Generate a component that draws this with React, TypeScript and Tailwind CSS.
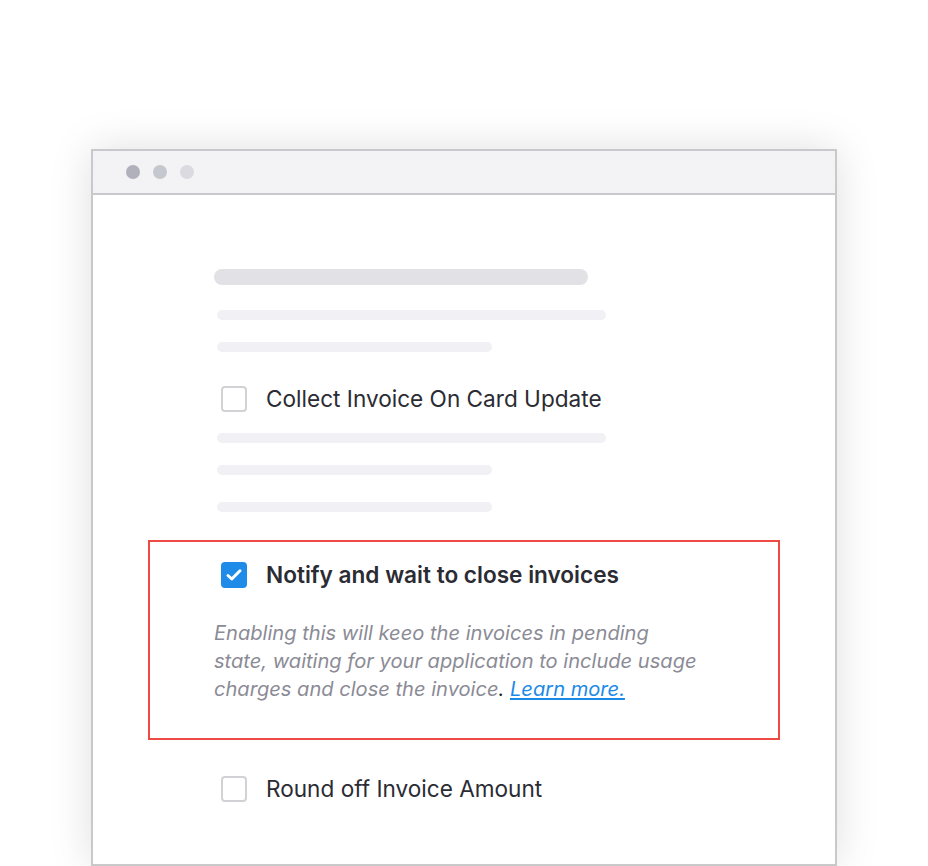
function Checkbox({ checked }: { checked?: boolean }) {
    if (checked) {
        return (
            <span className="flex h-[26px] w-[26px] shrink-0 items-center justify-center rounded-[4px] bg-[#1f8be8]">
                <svg width="18" height="18" viewBox="0 0 18 18" fill="none">
                    <path d="M3 9.5l3.8 3.5L15 4.8" stroke="white" strokeWidth="3" strokeLinecap="round" strokeLinejoin="round" />
                </svg>
            </span>
        )
    }
    return <span className="h-[26px] w-[26px] shrink-0 rounded-[4px] border-2 border-[#d2d2d6] bg-white" />
}

function Bar({ w, h = "h-[10px]", c = "bg-[#f1f1f5]", className = "" }: { w: string; h?: string; c?: string; className?: string }) {
    return <div className={`${w} ${h} ${c} rounded-full ${className}`} />
}

export default function App() {
    return (
        <div className="h-[866px] w-[928px] overflow-hidden bg-white pl-[91px] pt-[149px] font-['Inter',sans-serif]">
            <div className="h-[717px] w-[746px] border-2 border-[#c9c9cc] bg-white shadow-[0_0_40px_rgba(0,0,0,0.13)]">
                <div className="flex h-[44px] items-center gap-[13px] border-b-2 border-[#c9c9cc] bg-[#f3f3f5] pl-[33px]">
                    <span className="h-[14px] w-[14px] rounded-full bg-[#b1b1bb]" />
                    <span className="h-[14px] w-[14px] rounded-full bg-[#c6c6ce]" />
                    <span className="h-[14px] w-[14px] rounded-full bg-[#dadae0]" />
                </div>

                <div className="flex flex-col pt-[74px]">
                    <div className="flex flex-col pl-[121px]">
                        <Bar w="w-[374px]" h="h-[16px]" c="bg-[#e2e2e6]" />
                        <Bar w="w-[389px]" className="ml-[3px] mt-[25px]" />
                        <Bar w="w-[275px]" className="ml-[3px] mt-[22px]" />
                    </div>

                    <div className="mt-[34px] flex items-center gap-[19px] pl-[128px]">
                        <Checkbox />
                        <span className="text-[22.6px] leading-[26px] text-[#2b2b33]">Collect Invoice On Card Update</span>
                    </div>

                    <div className="flex flex-col pl-[124px]">
                        <Bar w="w-[389px]" className="mt-[21px]" />
                        <Bar w="w-[275px]" className="mt-[22px]" />
                        <Bar w="w-[275px]" className="mt-[27px]" />
                    </div>

                    <div className="ml-[55px] mt-[28px] h-[200px] w-[632px] border-2 border-[#ee4a43] pt-[20px]">
                        <div className="flex items-center gap-[19px] pl-[71px]">
                            <Checkbox checked />
                            <span className="text-[22.6px] font-semibold leading-[26px] text-[#2b2b33]">
                                Notify and wait to close invoices
                            </span>
                        </div>
                        <p className="mt-[31px] whitespace-nowrap pl-[64px] text-[20.1px] italic leading-[28px] text-[#8b8b96]">
                            Enabling this will keeo the invoices in pending
                            <br />
                            state, waiting for your application to include usage
                            <br />
                            charges and close the invoice<span className="text-[#1b1b22]">.</span>{" "}
                            <a className="text-[#1b8ae6] underline underline-offset-2" href="#">
                                Learn more.
                            </a>
                        </p>
                    </div>

                    <div className="mt-[36px] flex items-center gap-[19px] pl-[128px]">
                        <Checkbox />
                        <span className="text-[22.6px] leading-[26px] text-[#2b2b33]">Round off Invoice Amount</span>
                    </div>
                </div>
            </div>
        </div>
    )
}
